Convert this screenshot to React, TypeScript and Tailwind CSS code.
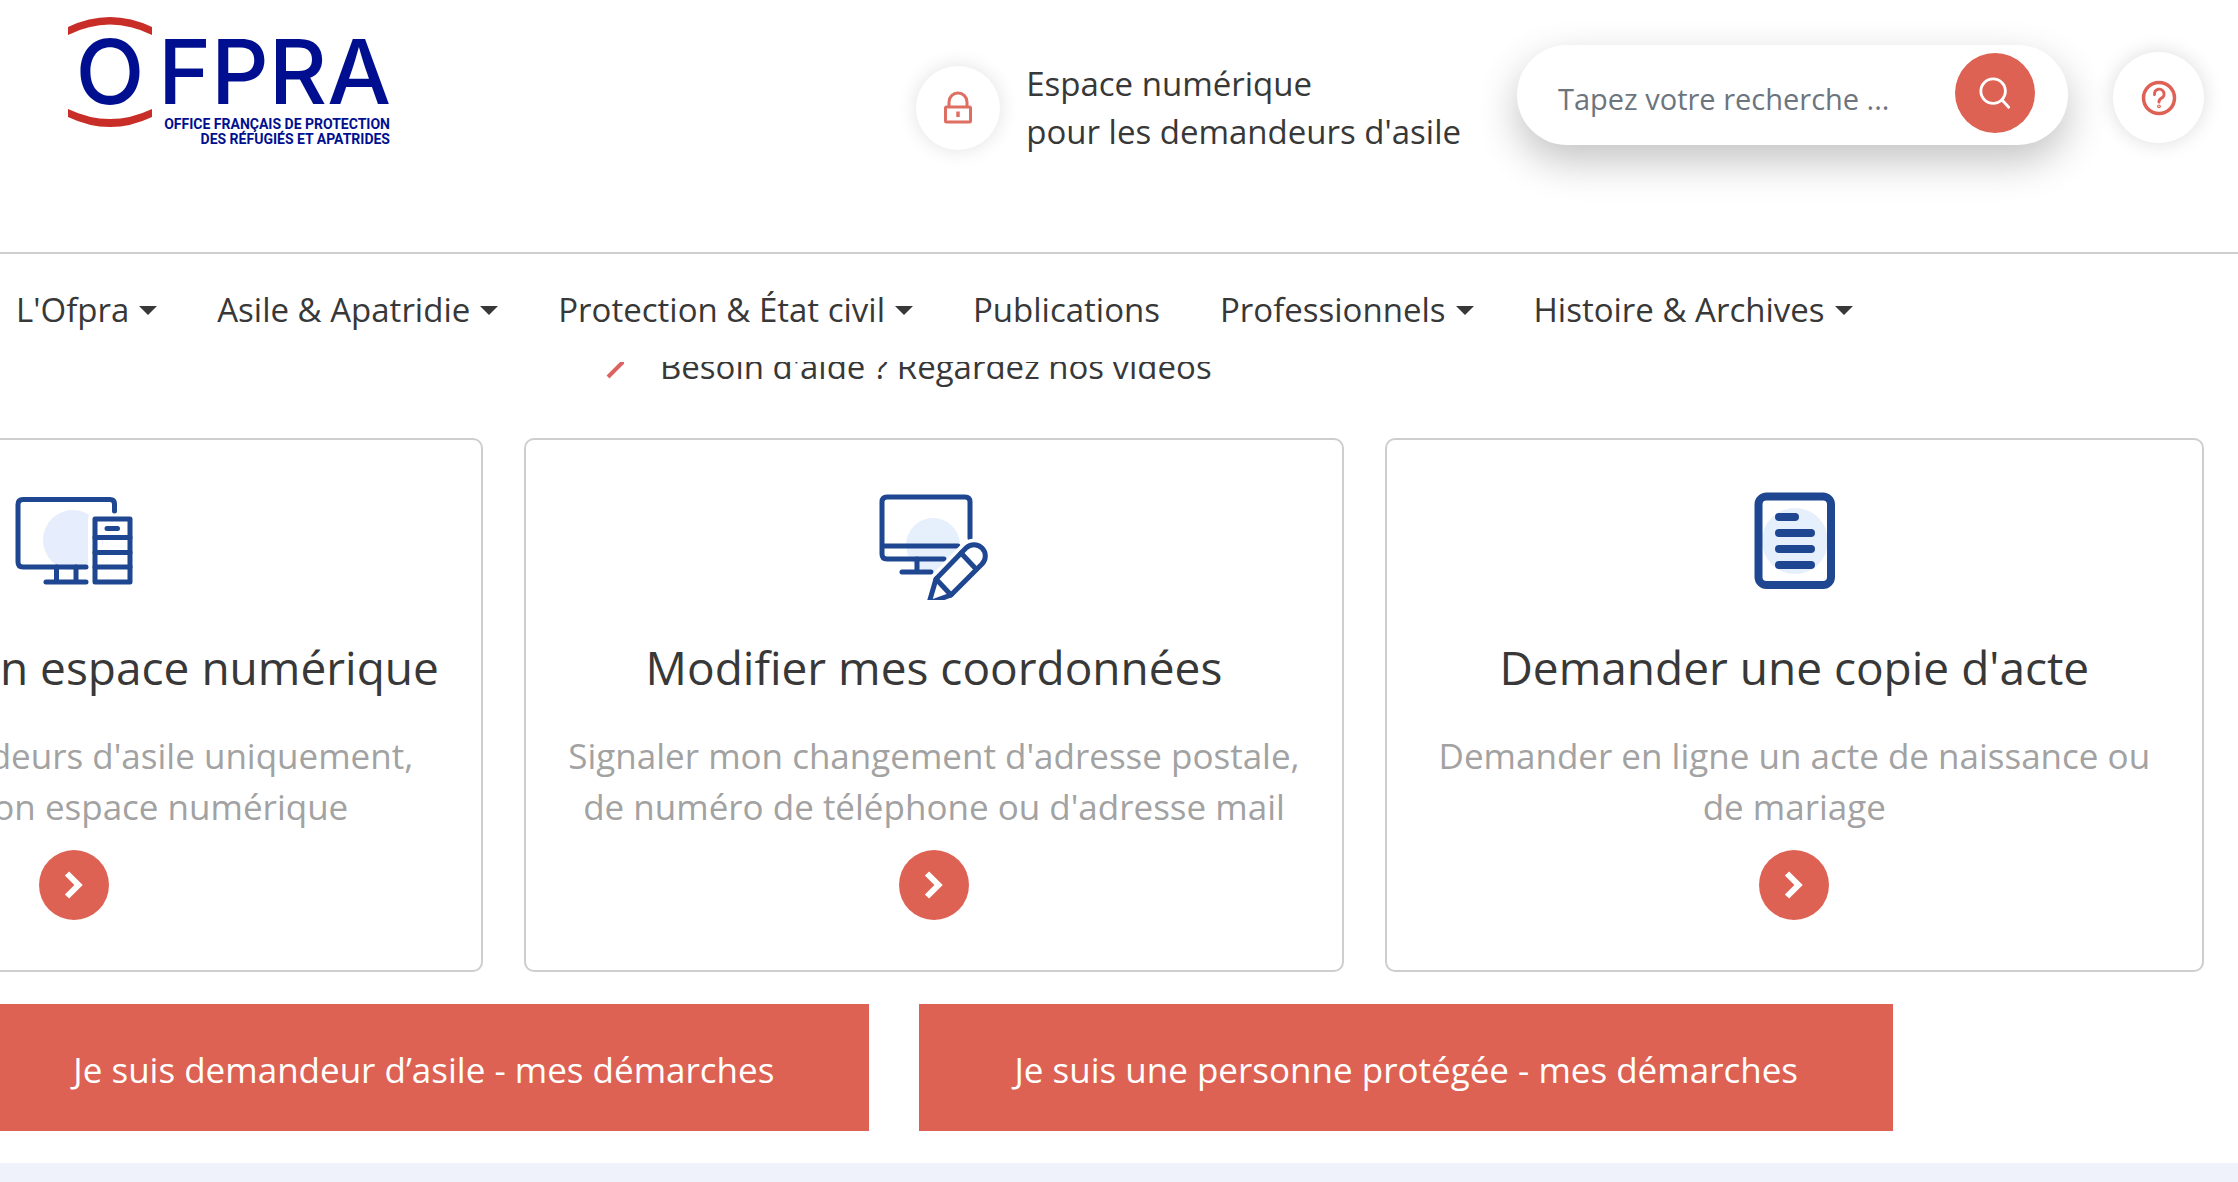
import type { ReactNode } from 'react';

interface NavItem {
  label: string;
  hasMenu: boolean;
}

interface ServiceCardProps {
  icon: ReactNode;
  title: string;
  lines: string[];
}

const navItems: NavItem[] = [
  { label: "L'Ofpra", hasMenu: true },
  { label: 'Asile & Apatridie', hasMenu: true },
  { label: 'Protection & État civil', hasMenu: true },
  { label: 'Publications', hasMenu: false },
  { label: 'Professionnels', hasMenu: true },
  { label: 'Histoire & Archives', hasMenu: true },
];

const Logo = () => (
  <svg width="340" height="160" viewBox="60 0 340 160" role="img" aria-label="Ofpra">
    <path d="M68 27Q110 7 152 27V35Q110 14 68 35Z" fill="#c92d28" />
    <path d="M68 109Q110 129 152 109V117Q110 137 68 117Z" fill="#c92d28" />
    <g fill="#000f8f" fontFamily="Inter, sans-serif" fontWeight="500" fontSize="90">
      <text x="110" y="104" textAnchor="middle">
        O
      </text>
      <text x="391" y="104" textAnchor="end">
        FPRA
      </text>
    </g>
    <g
      fill="#000f8f"
      fontFamily="Roboto, sans-serif"
      fontWeight="700"
      fontSize="14"
      textAnchor="end"
    >
      <text x="390" y="129">OFFICE FRANÇAIS DE PROTECTION</text>
      <text x="390" y="144">DES RÉFUGIÉS ET APATRIDES</text>
    </g>
  </svg>
);

const LockIcon = () => (
  <svg width="30" height="34" viewBox="0 0 30 34" fill="none" stroke="#df6e63" strokeWidth="3">
    <path d="M6 16V11A9 9 0 0 1 24 11V16" />
    <rect x="2.5" y="16" width="25" height="15" rx="1" />
    <path d="M15 20.5V26" strokeWidth="3.5" />
  </svg>
);

const HelpIcon = () => (
  <svg width="36" height="36" viewBox="0 0 36 36" fill="none" stroke="#df6156" strokeLinecap="round">
    <circle cx="18" cy="18" r="15.5" strokeWidth="3.5" />
    <path d="M13.5 14.5A4.8 4.8 0 1 1 20.5 18.2Q18 19.5 18 22" strokeWidth="3" />
    <circle cx="18" cy="26.3" r="0.6" strokeWidth="2.6" />
  </svg>
);

const SearchIcon = () => (
  <svg width="34" height="34" viewBox="0 0 36 36" fill="none" stroke="white" strokeWidth="3" strokeLinecap="round">
    <circle cx="16" cy="16" r="13" />
    <path d="M25.5 25.5L32.5 33" />
  </svg>
);

const Chevron = () => (
  <svg width="20" height="30" viewBox="0 0 20 30" fill="none" stroke="white" strokeWidth="6">
    <path d="M3 3.5L14.5 15L3 26.5" />
  </svg>
);

const DesktopIcon = () => (
  <svg
    width="120"
    height="120"
    viewBox="1 0 120 120"
    fill="none"
    stroke="#1f4690"
    strokeWidth="5"
    strokeLinecap="round"
    strokeLinejoin="round"
  >
    <circle cx="60" cy="60" r="30" fill="#e6edfc" stroke="none" />
    <rect x="82" y="39" width="35" height="63" stroke="white" strokeWidth="14" />
    <path d="M101.5 31V24Q101.5 19.5 97 19.5H10Q5 19.5 5 24.5V82Q5 87 10 87H73" />
    <path d="M43.5 87V102M63 87V102M33 102H73" />
    <rect x="82" y="39" width="35" height="63" />
    <path d="M82 57.5H117M82 72.5H117M82 87H117M94 48.5H104.5" />
  </svg>
);

const EditIcon = () => (
  <svg
    width="120"
    height="120"
    viewBox="1 0 120 120"
    fill="none"
    stroke="#1f4690"
    strokeWidth="5"
    strokeLinecap="round"
    strokeLinejoin="round"
  >
    <circle cx="60" cy="65" r="27" fill="#e6effc" stroke="none" />
    <path d="M97 58V22Q97 17 92 17H14Q9 17 9 22V74Q9 79 14 79H71M9 66H85" />
    <path d="M44 79V92M29 92H58" />
    <path
      d="M56 123L63 99L93 68A11 11 0 0 1 109 84L78 115Z"
      stroke="white"
      strokeWidth="12"
    />
    <path d="M56 123L63 99L93 68A11 11 0 0 1 109 84L78 115Z" fill="white" />
    <path d="M63 99L78 115M88 73L103 89" />
  </svg>
);

const DocumentIcon = () => (
  <svg
    width="120"
    height="120"
    viewBox="1 0 120 120"
    fill="none"
    stroke="#1f4690"
    strokeWidth="8"
    strokeLinecap="round"
  >
    <circle cx="62" cy="61" r="33" fill="#e6effc" stroke="none" />
    <rect x="25.5" y="16.5" width="72.5" height="88.5" rx="8" />
    <path d="M46 37H62M46 53H78M46 69H78M46 85H78" />
  </svg>
);

const ServiceCard = ({ icon, title, lines }: ServiceCardProps) => (
  <article className="flex flex-col items-center rounded-[10px] border-2 border-[#cecece] pt-10 pb-[50px] text-center whitespace-nowrap">
    {icon}
    <h2 className="mt-10 text-[46px] leading-[54px]">{title}</h2>
    <p className="mt-9 text-[35px] leading-[51px] text-[#a2a2a2]">
      {lines.map((line) => (
        <span key={line} className="block">
          {line}
        </span>
      ))}
    </p>
    <a
      href="#"
      aria-label={title}
      className="mt-[18px] flex size-[70px] items-center justify-center rounded-full bg-[#dd6253]"
    >
      <Chevron />
    </a>
  </article>
);

export default function App() {
  return (
    <div className="min-h-screen overflow-hidden bg-white font-['Open_Sans',sans-serif] text-[#383838]">
      <header className="relative z-10 bg-white">
        <div className="flex items-start justify-between border-b-2 border-[#cecece] pr-[34px] pb-[92px] pl-[60px]">
          <a href="#">
            <Logo />
          </a>
          <div className="flex items-start pt-[45px]">
            <a href="#" className="mt-[15px] mr-14 flex items-center gap-[26px]">
              <span className="flex size-[84px] items-center justify-center rounded-full shadow-[0_0_20px_rgba(0,0,0,0.12)]">
                <LockIcon />
              </span>
              <span className="text-[33px] leading-[48px] whitespace-nowrap">
                Espace numérique
                <br />
                pour les demandeurs d'asile
              </span>
            </a>
            <form className="mr-[45px] flex h-[100px] w-[551px] items-start rounded-full pt-2 pr-[33px] pl-[41px] shadow-[0_16px_40px_rgba(0,0,0,0.24)]">
              <input
                type="search"
                aria-label="Rechercher"
                placeholder="Tapez votre recherche ..."
                className="h-[90px] min-w-0 flex-1 bg-transparent text-[29px] outline-none placeholder:text-[#6c757d]"
              />
              <button
                type="button"
                aria-label="Lancer la recherche"
                className="flex size-20 items-center justify-center rounded-full bg-[#dd6253]"
              >
                <SearchIcon />
              </button>
            </form>
            <button
              type="button"
              aria-label="Aide"
              className="mt-[7px] flex size-[91px] items-center justify-center rounded-full shadow-[0_0_20px_rgba(0,0,0,0.14)]"
            >
              <HelpIcon />
            </button>
          </div>
        </div>
        <nav className="flex gap-[60px] pt-[31px] pb-[27px] pl-4 text-[33px] leading-[50px] whitespace-nowrap">
          {navItems.map(({ label, hasMenu }) => (
            <a key={label} href="#" className="flex items-center gap-[10px]">
              {label}
              {hasMenu && (
                <span className="border-x-[9px] border-t-[9px] border-x-transparent border-t-[#383838]" />
              )}
            </a>
          ))}
        </nav>
      </header>

      <main>
        <a
          href="#"
          className="-mt-5 flex items-center gap-9 pl-[606px] text-[33px] leading-[50px] whitespace-nowrap"
        >
          <svg width="18" height="40" viewBox="0 0 18 40" fill="none" stroke="#dd6262" strokeWidth="4">
            <path d="M2 30L18 14" />
          </svg>
          Besoin d'aide ? Regardez nos vidéos
        </a>

        <section className="mt-[46px] mr-[34px] -ml-[336px] grid grid-cols-3 gap-[41px]">
          <ServiceCard
            icon={<DesktopIcon />}
            title="Accéder à mon espace numérique"
            lines={["Pour les demandeurs d'asile uniquement,", 'consulter mon espace numérique']}
          />
          <ServiceCard
            icon={<EditIcon />}
            title="Modifier mes coordonnées"
            lines={[
              "Signaler mon changement d'adresse postale,",
              "de numéro de téléphone ou d'adresse mail",
            ]}
          />
          <ServiceCard
            icon={<DocumentIcon />}
            title="Demander une copie d'acte"
            lines={['Demander en ligne un acte de naissance ou', 'de mariage']}
          />
        </section>

        <section className="mt-8 flex justify-end gap-[50px] pr-[345px] text-[35px] leading-[51px] whitespace-nowrap text-white">
          <a href="#" className="shrink-0 bg-[#dd6253] px-[95px] pt-10 pb-9">
            Je suis demandeur d’asile - mes démarches
          </a>
          <a href="#" className="shrink-0 bg-[#dd6253] px-[95px] pt-10 pb-9">
            Je suis une personne protégée - mes démarches
          </a>
        </section>
      </main>

      <div className="mt-8 h-5 bg-[#eff2fb]" />
    </div>
  );
}
